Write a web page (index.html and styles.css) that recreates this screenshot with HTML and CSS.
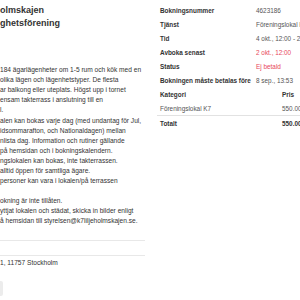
FILE: index.html
```html
<!DOCTYPE html>
<html lang="sv">
<head>
  <meta charset="UTF-8">
  <title>Bokning</title>
  <link rel="stylesheet" href="styles.css">
</head>
<body>
  <div class="page">
    <!-- föreningens information -->
    <section class="info">
      <h4 class="info-title">olmskajen<br>ghetsförening</h4>
      <p class="para first">184 ägarlägenheter om 1-5 rum och kök med en<br>olika lägen och lägenhetstyper. De flesta<br>ar balkong eller uteplats. Högst upp i tornet<br>ensam takterrass i anslutning till en<br>l.</p>
      <p class="para">alen kan bokas varje dag (med undantag för Jul,<br>idsommarafton, och Nationaldagen) mellan<br>nlista dag. Information och rutiner gällande<br>på hemsidan och i bokningskalendern.<br>ngslokalen kan bokas, inte takterrassen.<br>alltid öppen för samtliga ägare.<br>personer kan vara i lokalen/på terrassen</p>
      <p class="para third">okning är inte tillåten.<br>yttjat lokalen och städat, skicka in bilder enligt<br>å hemsidan till styrelsen@k7liljeholmskajen.se.</p>
      <hr class="rule">
      <hr class="rule second">
      <div class="address">1, 11757 Stockholm</div>
      <div class="btn-edge"></div>
    </section>

    <!-- bokningsdetaljer -->
    <section class="booking">
      <table class="details">
        <tr><th>Bokningsnummer</th><td>4623186</td></tr>
        <tr><th>Tjänst</th><td>Föreningslokal K7</td></tr>
        <tr><th>Tid</th><td>4 okt., 12:00 - 22:00</td></tr>
        <tr><th>Avboka senast</th><td class="danger">2 okt., 12:00</td></tr>
        <tr><th>Status</th><td class="danger">Ej betald</td></tr>
        <tr><th>Bokningen måste betalas före</th><td>8 sep., 13:53</td></tr>
      </table>
      <table class="prices">
        <tr><th>Kategori</th><th>Pris</th></tr>
        <tr class="item"><td>Föreningslokal K7</td><td>550.00</td></tr>
        <tr class="total"><th>Totalt</th><th>550.00</th></tr>
      </table>
    </section>
  </div>
</body>
</html>
```

FILE: styles.css
```css
body { /* hela sidan */
  margin: 0;
  background: #fff;
  color: #333;
  font-family: "Liberation Sans", Arial, sans-serif;
  overflow: hidden;
}
.page {
  display: flex;
  width: 300px;
  height: 300px;
  overflow: hidden;
}
.info { /* vänster kolumn */
  width: 145px;
  flex: none;
  overflow: hidden;
  white-space: nowrap;
}
.info-title {
  margin: 4px 0 0;
  font-size: 9px;
  line-height: 13px;
  font-weight: bold;
}
.para {
  margin: 1px 0 0;
  font-size: 6.6px;
  line-height: 10px;
}
.para.first {
  margin-top: 35px;
}
.para.third {
  margin-top: 10px;
}
.rule {
  border: 0;
  border-top: 1px solid #e8e8e8;
  margin: 14px 0 0;
}
.rule.second {
  margin-top: 14px;
}
.address {
  margin-top: 2px;
  font-size: 6.6px;
  line-height: 10px;
}
.btn-edge { /* knappens kant */
  margin-top: 13px;
  width: 3px;
  height: 15px;
  background: #ececec;
  border-radius: 0 2px 2px 0;
}
.booking { /* höger kolumn */
  flex: none;
  width: 200px;
  margin-left: 12px;
  padding-top: 3px;
}
table {
  border-collapse: collapse;
  font-size: 6.4px;
  white-space: nowrap;
}
.details th, .details td, .prices th, .prices td {
  padding: 0 0 0 3px;
  height: 14px;
  text-align: left;
  vertical-align: middle;
}
.details th {
  width: 93px;
  font-weight: bold;
  color: #333;
}
.details td {
  color: #555;
}
.details td.danger {
  color: #e8475b;
}
.prices {
  width: 200px;
}
.prices th:first-child, .prices td:first-child {
  width: 119px;
}
.prices td {
  color: #555;
}
.prices .item td {
  height: 14px;
  border-bottom: 1px solid #e2e2e2;
}
.prices .total th {
  height: 15px;
}
```
